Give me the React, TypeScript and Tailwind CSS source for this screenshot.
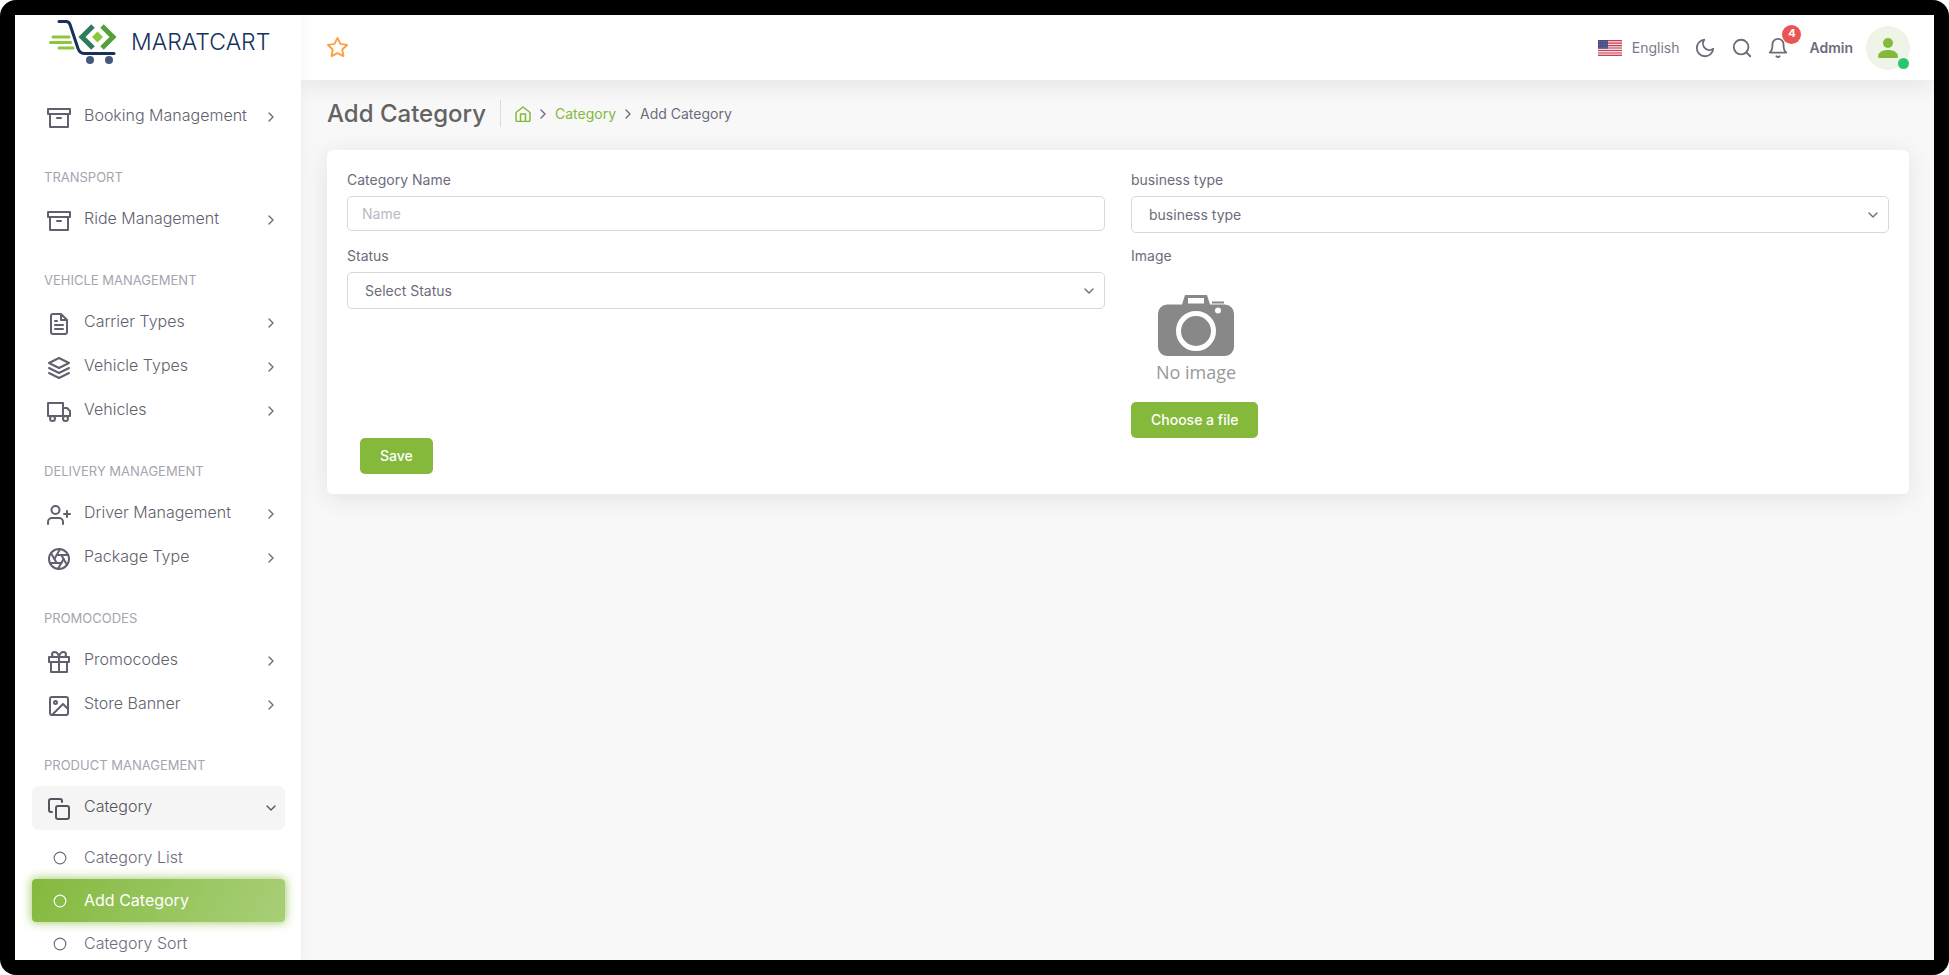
import type { ReactNode } from "react";
import { Aperture, ChevronDown, ChevronRight, Circle, Search } from "lucide-react";

interface MenuItem {
  label: string;
  icon: ReactNode;
}

interface MenuSection {
  title?: string;
  items: MenuItem[];
}

interface FeatherIconProps {
  className?: string;
  children: ReactNode;
}

const FeatherIcon = ({ className = "size-6", children }: FeatherIconProps) => (
  <svg
    viewBox="0 0 24 24"
    fill="none"
    stroke="currentColor"
    strokeWidth="2"
    strokeLinecap="round"
    strokeLinejoin="round"
    className={className}
  >
    {children}
  </svg>
);

const archiveIcon = (
  <FeatherIcon>
    <path d="M21 8v13H3V8M1 3h22v5H1zM10 12h4" />
  </FeatherIcon>
);

const fileIcon = (
  <FeatherIcon>
    <path d="M14 2H6a2 2 0 0 0-2 2v16a2 2 0 0 0 2 2h12a2 2 0 0 0 2-2V8zM14 2v6h6M16 13H8M16 17H8M10 9H8" />
  </FeatherIcon>
);

const layersIcon = (
  <FeatherIcon>
    <path d="M12 2 2 7l10 5 10-5-10-5zM2 17l10 5 10-5M2 12l10 5 10-5" />
  </FeatherIcon>
);

const truckIcon = (
  <FeatherIcon>
    <path d="M1 3h15v13H1zM16 8h4l3 3v5h-7z" />
    <circle cx="5.5" cy="18.5" r="2.5" />
    <circle cx="18.5" cy="18.5" r="2.5" />
  </FeatherIcon>
);

const userPlusIcon = (
  <FeatherIcon>
    <path d="M16 21v-2a4 4 0 0 0-4-4H5a4 4 0 0 0-4 4v2M20 8v6M23 11h-6" />
    <circle cx="8.5" cy="7" r="4" />
  </FeatherIcon>
);

const giftIcon = (
  <FeatherIcon>
    <path d="M20 12v10H4V12M2 7h20v5H2zM12 22V7M12 7H7.5a2.5 2.5 0 0 1 0-5C11 2 12 7 12 7zM12 7h4.5a2.5 2.5 0 0 0 0-5C13 2 12 7 12 7z" />
  </FeatherIcon>
);

const imageIcon = (
  <FeatherIcon>
    <rect x="3" y="3" width="18" height="18" rx="2" />
    <circle cx="8.5" cy="8.5" r="1.5" />
    <path d="m21 15-5-5L5 21" />
  </FeatherIcon>
);

const copyIcon = (
  <FeatherIcon>
    <rect x="9" y="9" width="13" height="13" rx="2" />
    <path d="M5 15H4a2 2 0 0 1-2-2V4a2 2 0 0 1 2-2h9a2 2 0 0 1 2 2v1" />
  </FeatherIcon>
);

const sections: MenuSection[] = [
  { items: [{ label: "Booking Management", icon: archiveIcon }] },
  { title: "Transport", items: [{ label: "Ride Management", icon: archiveIcon }] },
  {
    title: "Vehicle Management",
    items: [
      { label: "Carrier Types", icon: fileIcon },
      { label: "Vehicle Types", icon: layersIcon },
      { label: "Vehicles", icon: truckIcon },
    ],
  },
  {
    title: "Delivery Management",
    items: [
      { label: "Driver Management", icon: userPlusIcon },
      { label: "Package Type", icon: <Aperture className="size-6" /> },
    ],
  },
  {
    title: "Promocodes",
    items: [
      { label: "Promocodes", icon: giftIcon },
      { label: "Store Banner", icon: imageIcon },
    ],
  },
];

const subItems = ["Category List", "Add Category", "Category Sort"];

function Logo() {
  return (
    <a href="#" className="flex items-center gap-3.5 text-[#17305c]">
      <svg viewBox="0 0 68 46" className="h-[46px] w-[68px]" fill="none" strokeLinecap="round">
        <path d="M4 18h16M1.5 23.5h20M10 29h14" stroke="#8cc63f" strokeWidth="3" />
        <path
          d="M10 2.5h7q3 0 4 3l8 24q2 5 6 5h30"
          stroke="#17305c"
          strokeWidth="3"
          strokeLinejoin="round"
        />
        <path d="M44 7 33 18l11 11" stroke="#2d7d5a" strokeWidth="5" strokeLinecap="butt" />
        <path d="m53 7 11 11-11 11" stroke="#55a03c" strokeWidth="5" strokeLinecap="butt" />
        <path d="m48.5 12.5 5.5 5.5-5.5 5.5-5.5-5.5z" fill="#8cc63f" />
        <circle cx="41" cy="41" r="4" fill="#44587c" />
        <circle cx="60" cy="41" r="4" fill="#44587c" />
      </svg>
      <span className="text-[23px] leading-8 font-light">MARATCART</span>
    </a>
  );
}

function SectionTitle({ children }: { children: ReactNode }) {
  return (
    <h6 className="px-3 pt-7 pb-[11px] text-[13px] leading-5 text-[#a6a4b0] uppercase">
      {children}
    </h6>
  );
}

function Sidebar() {
  return (
    <aside className="relative z-20 flex w-[286px] shrink-0 flex-col overflow-hidden bg-white shadow-[0_0_15px_rgba(34,41,47,0.05)]">
      <div className="flex h-20 shrink-0 items-start pt-1 pl-[34px]">
        <Logo />
      </div>
      <nav className="min-h-0 flex-1 pr-4 pl-[17px]">
        {sections.map((section, i) => (
          <div key={i}>
            {section.title && <SectionTitle>{section.title}</SectionTitle>}
            {section.items.map((item) => (
              <a key={item.label} href="#" className="flex h-11 items-center pr-1.5 pl-[15px]">
                <span className="mt-0.5 text-[#625f6e]">{item.icon}</span>
                <span className="mb-1 ml-[13px] flex-1 text-base font-light text-[#625f6e]">
                  {item.label}
                </span>
                <ChevronRight className="size-4" />
              </a>
            ))}
          </div>
        ))}
        <SectionTitle>Product Management</SectionTitle>
        <a
          href="#"
          className="flex h-11 items-center rounded-md bg-[#f5f5f5] pr-1.5 pl-[15px] text-[#565360]"
        >
          <span className="mt-0.5">{copyIcon}</span>
          <span className="mb-1 ml-[13px] flex-1 text-base font-light">Category</span>
          <ChevronDown className="size-4" />
        </a>
        <div className="mt-1.5">
          {subItems.map((label) => (
            <a
              key={label}
              href="#"
              className={
                label === "Add Category"
                  ? "flex h-[43px] items-center rounded bg-linear-118 from-[#84b93c] to-[#a8cf77] pl-[21px] text-white shadow-[0_0_10px_1px_rgba(132,185,60,0.7)]"
                  : "flex h-[43px] items-center pl-[21px] font-light"
              }
            >
              <Circle className="size-3.5" />
              <span className="mb-0.5 ml-[17px] text-base">{label}</span>
            </a>
          ))}
        </div>
      </nav>
    </aside>
  );
}

function UsFlag() {
  return (
    <svg viewBox="0 0 24 16" className="h-4 w-6">
      <rect width="24" height="16" fill="#f0dfe3" />
      <path
        d="M0 .6h24M0 3.1h24M0 5.6h24M0 8h24M0 10.5h24M0 13h24M0 15.4h24"
        stroke="#cc3e52"
        strokeWidth="1.2"
      />
      <rect width="10" height="8.6" fill="#484a82" />
      <path
        d="M1 1.5h9M1.5 3h8M1 4.5h9M1.5 6h8M1 7.5h9"
        stroke="#9293b8"
        strokeWidth=".6"
        strokeDasharray=".7 1"
      />
    </svg>
  );
}

function Navbar() {
  return (
    <header className="relative z-10 flex h-[65px] shrink-0 items-center bg-white pr-6 pl-[25px] shadow-[0_4px_24px_rgba(34,41,47,0.1)]">
      <button type="button" aria-label="Bookmark" className="text-[#ff9f43]">
        <FeatherIcon className="size-[23px]">
          <path d="m12 2 3.09 6.26L22 9.27l-5 4.87 1.18 6.88L12 17.77l-6.18 3.25L7 14.14 2 9.27l6.91-1.01z" />
        </FeatherIcon>
      </button>
      <div className="ml-auto flex items-center">
        <button type="button" className="flex items-center gap-2.5 text-sm text-[#7c7987]">
          <UsFlag />
          English
        </button>
        <button type="button" aria-label="Dark mode" className="ml-[15px]">
          <FeatherIcon className="size-[22px]">
            <path d="M21 12.79A9 9 0 1 1 11.21 3 7 7 0 0 0 21 12.79z" />
          </FeatherIcon>
        </button>
        <button type="button" aria-label="Search" className="ml-[15px]">
          <Search className="size-[22px]" />
        </button>
        <button type="button" aria-label="Notifications" className="relative ml-3.5">
          <FeatherIcon className="size-[22px]">
            <path d="M18 8A6 6 0 0 0 6 8c0 7-3 9-3 9h18s-3-2-3-9M13.73 21a2 2 0 0 1-3.46 0" />
          </FeatherIcon>
          <span className="absolute -top-3 -right-3 flex size-[19px] items-center justify-center rounded-full bg-[#ea5455] text-[11px] font-bold text-white">
            4
          </span>
        </button>
        <span className="ml-5 text-sm font-semibold">Admin</span>
        <a href="#" aria-label="Profile" className="relative ml-[13px] block">
          <span className="flex size-11 items-center justify-center rounded-full bg-[#eff5e6]">
            <svg viewBox="0 0 20 20" className="size-5" fill="#84b93c">
              <circle cx="10" cy="5" r="5" />
              <path d="M0 18.5C0 14 5 12 10 12s10 2 10 6.5q0 1.5-1.5 1.5h-17Q0 20 0 18.5z" />
            </svg>
          </span>
          <span className="absolute right-px bottom-px size-[11px] rounded-full bg-[#28c76f]" />
        </a>
      </div>
    </header>
  );
}

interface SelectFieldProps {
  id: string;
  label: string;
  placeholder: string;
}

function SelectField({ id, label, placeholder }: SelectFieldProps) {
  return (
    <div>
      <label htmlFor={id} className="block leading-5">
        {label}
      </label>
      <div className="relative mt-1.5">
        <select
          id={id}
          className="block h-[37px] w-full appearance-none rounded-[5px] border border-[#d8d6de] bg-white px-[17px]"
        >
          <option>{placeholder}</option>
        </select>
        <ChevronDown className="pointer-events-none absolute top-[11px] right-2 size-4" />
      </div>
    </div>
  );
}

function NoImage() {
  return (
    <div className="flex size-[130px] flex-col items-center pt-[29px] text-[#888]">
      <svg viewBox="0 0 76 61" className="h-[61px] w-[76px]">
        <path
          fill="currentColor"
          fillRule="evenodd"
          d="M24 9.5 27 0h22l3 9.5h15a9 9 0 0 1 9 9V52a9 9 0 0 1-9 9H9a9 9 0 0 1-9-9V18.5a9 9 0 0 1 9-9zM30 3v5.5h16V3z"
        />
        <path d="M54 7.5h12" stroke="currentColor" strokeWidth="2" />
        <circle cx="38" cy="36" r="17.5" fill="none" stroke="white" strokeWidth="5" />
        <circle cx="60" cy="15.5" r="3" fill="white" />
      </svg>
      <span className="mt-1 font-['Open_Sans',sans-serif] text-lg leading-6 text-[#999]">
        No image
      </span>
    </div>
  );
}

export default function App() {
  return (
    <div className="h-screen overflow-hidden rounded-2xl bg-black p-[15px] font-[Inter,sans-serif] text-sm text-[#6e6b7b]">
      <div className="flex h-full overflow-hidden bg-[#f8f8f8]">
        <Sidebar />
        <div className="flex min-w-0 flex-1 flex-col">
          <Navbar />
          <main className="pt-5 pr-[25px] pl-[26px]">
            <div className="flex items-center">
              <h2 className="border-r border-[#d6dce1] pr-3.5 text-2xl leading-[27px] font-medium text-[#636363]">
                Add Category
              </h2>
              <nav aria-label="Breadcrumb" className="ml-3.5 flex items-center gap-1">
                <a href="#" aria-label="Home" className="text-[#84b93c]">
                  <svg
                    viewBox="0 0 16 16"
                    className="size-4"
                    fill="none"
                    stroke="currentColor"
                    strokeWidth="1.5"
                    strokeLinejoin="round"
                  >
                    <path d="M1 6.5 8 1l7 5.5V14q0 1.5-1.5 1.5h-11Q1 15.5 1 14zM5.5 15.5V8h5v7.5" />
                  </svg>
                </a>
                <ChevronRight className="size-4" />
                <a href="#" className="text-[#84b93c]">
                  Category
                </a>
                <ChevronRight className="size-4" />
                <span>Add Category</span>
              </nav>
            </div>

            <form className="mt-[23px] rounded-md bg-white p-5 shadow-[0_4px_24px_rgba(34,41,47,0.1)]">
              <div className="grid grid-cols-2 gap-x-[26px]">
                <div>
                  <label htmlFor="name" className="block leading-5">
                    Category Name
                  </label>
                  <input
                    id="name"
                    type="text"
                    placeholder="Name"
                    className="mt-1.5 mb-[15px] block h-[35px] w-full rounded-[5px] border border-[#d8d6de] px-3.5 placeholder:text-[#b9b9c3]"
                  />
                  <SelectField id="status" label="Status" placeholder="Select Status" />
                </div>
                <div>
                  <SelectField id="business" label="business type" placeholder="business type" />
                  <div className="mt-[13px] leading-5">Image</div>
                  <NoImage />
                  <button
                    type="button"
                    className="mt-1.5 h-9 rounded-[5px] bg-[#84b93c] px-5 font-medium text-white"
                  >
                    Choose a file
                  </button>
                </div>
              </div>
              <button
                type="submit"
                className="ml-[13px] h-9 rounded-[5px] bg-[#84b93c] px-5 font-medium text-white"
              >
                Save
              </button>
            </form>
          </main>
        </div>
      </div>
    </div>
  );
}
